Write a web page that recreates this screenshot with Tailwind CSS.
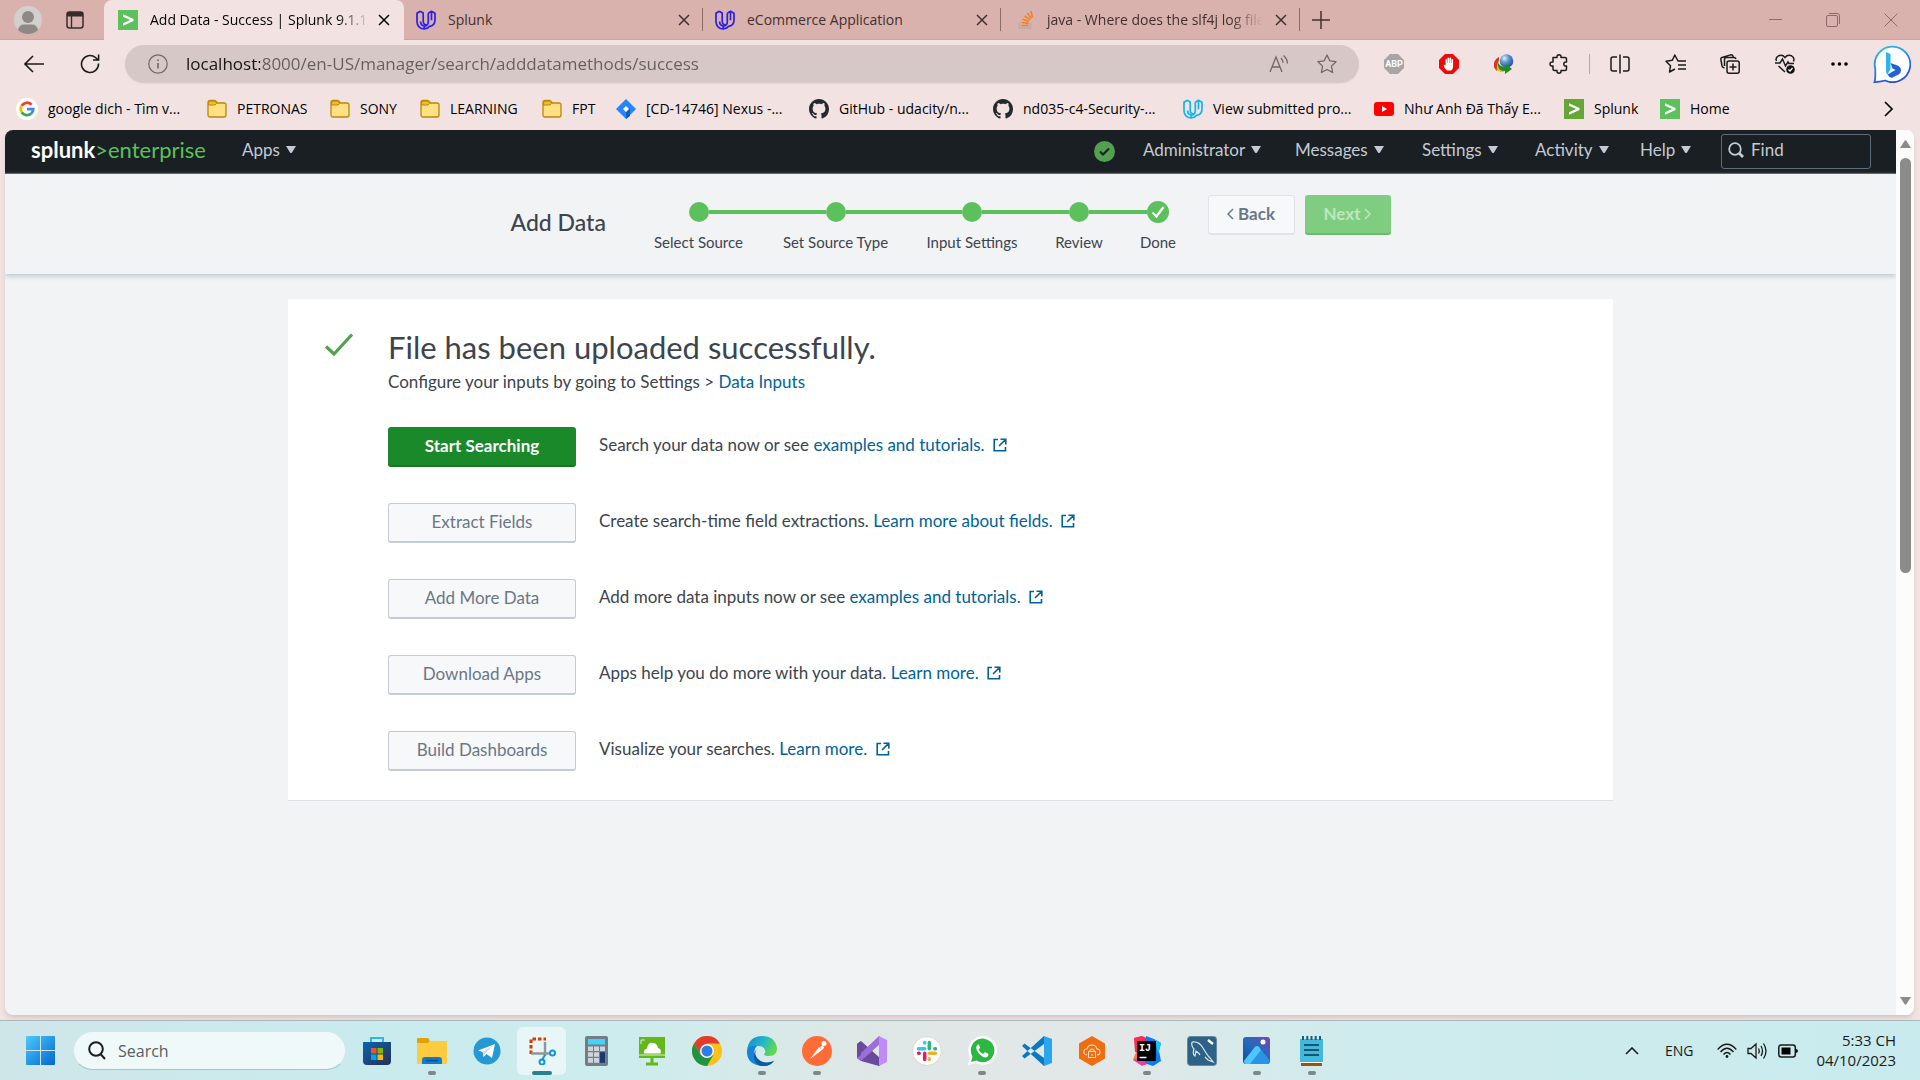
<!DOCTYPE html>
<html lang="en">
<head>
<meta charset="utf-8">
<title>Add Data - Success | Splunk 9.1.1</title>
<script src="https://cdn.jsdelivr.net/npm/@tailwindcss/browser@4"></script>
</head>
<body class="bg-[#f2e3e2] font-['Open_Sans',sans-serif] text-[#1b1b1b]">
<svg class="hidden" aria-hidden="true">
  <symbol id="close" viewBox="0 0 12 12"><path d="M1 1l10 10M11 1L1 11" stroke="currentColor" stroke-width="1.5" fill="none"/></symbol>
  <symbol id="splunk" viewBox="0 0 20 20"><path d="M5 4.2l10.5 4.7v2L5 15.8v-2.5l7.3-3.3L5 6.7z" fill="#fff"/></symbol>
  <symbol id="udacity" viewBox="0 0 20 20"><path d="M4.200 1.300L1 3.300v8.500c0 4 3 7.200 7.200 7.200V16C5.700 15.500 4.600 13.500 4.600 11.500M4.200 1.300L7.200 3v8c0 2.500 1.300 4 4 4.300M12.300 3.200l3.200-1.900L19 3.200v6.500c0 4-2.300 6.300-5.600 6.700q-1 2-5.200 2.600M12.300 3.200v8.600c0 2-1.300 4-4.100 4.300M15.500 1.300v9" fill="none" stroke="currentColor" stroke-width="1.700" stroke-linejoin="round"/></symbol>
  <symbol id="folder" viewBox="0 0 20 20"><path d="M1 4.500V3.500Q1 1.500 3 1.500h4.300q1 0 1.600.8L10.500 4H17q2 0 2 2v10q0 2-2 2H3q-2 0-2-2z" fill="#ffe083" stroke="#b9870c" stroke-width="1.300"/><path d="M1.600 6V4Q1.600 2.100 3 2.100h4.200q.8 0 1.200.6l1.300 1.600L8 6z" fill="#f3bd22" stroke="#b9870c" stroke-width="1"/></symbol>
  <symbol id="github" viewBox="0 0 16 16"><path d="M8 0C3.580 0 0 3.580 0 8c0 3.540 2.290 6.530 5.470 7.590.4.070.550-.170.550-.380 0-.190-.010-.820-.010-1.490-2.010.370-2.530-.490-2.690-.940-.090-.230-.480-.940-.820-1.130-.280-.150-.680-.520-.010-.530.630-.010 1.080.580 1.230.820.720 1.210 1.870.870 2.330.660.070-.520.280-.870.510-1.070-1.780-.2-3.640-.890-3.640-3.950 0-.870.310-1.590.820-2.150-.080-.2-.360-1.020.080-2.120 0 0 .670-.210 2.200.820.640-.180 1.320-.270 2-.270s1.360.090 2 .270c1.530-1.040 2.200-.820 2.200-.820.440 1.100.160 1.920.080 2.120.510.560.820 1.270.820 2.150 0 3.070-1.870 3.750-3.650 3.950.290.250.540.730.540 1.480 0 1.070-.010 1.930-.010 2.200 0 .210.150.460.550.380A8.010 8.010 0 0 0 16 8c0-4.420-3.580-8-8-8z" fill="#24292e"/></symbol>
  <symbol id="caret" viewBox="0 0 10 8"><path d="M0 0h10L6 6.500q-1 1-2 0z" fill="currentColor"/></symbol>
  <symbol id="external" viewBox="0 0 14 14"><path d="M5 1.500H1.200v11.300h11.300V9M7.500 1.200h5.300v5.300M12.500 1.500L6 8" fill="none" stroke="currentColor" stroke-width="1.600"/></symbol>
</svg>
<div class="flex min-h-screen flex-col">

  <!-- tab strip -->
  <header class="flex h-10 items-stretch border-b border-[#cfa39e] bg-[#d9b2ad] text-sm text-[#43302e]">
    <div class="flex w-[104px] items-center gap-6 pl-3.5">
      <button aria-label="Profile"><svg class="size-7" viewBox="0 0 28 28"><circle cx="14" cy="14" r="14" fill="#d2cfcc"/><circle cx="14" cy="11" r="6" fill="#8d8986"/><path d="M4 24q1-5.500 6-5.500h8q5 0 6 5.500-4 4-10 4T4 24z" fill="#8d8986"/></svg></button>
      <button aria-label="Tab actions"><svg class="size-[18px]" viewBox="0 0 18 18"><rect x="1" y="1" width="16" height="16" rx="2.500" fill="none" stroke="#382b2a" stroke-width="1.500"/><path d="M1 3q0-2 2-2h12q2 0 2 2v2.500H1z" fill="#382b2a"/><path d="M5.500 5v12" stroke="#382b2a" stroke-width="1.400"/></svg></button>
    </div>
    <nav class="flex items-stretch" aria-label="Tabs">
      <div class="-mb-px flex w-[300px] items-center rounded-t-lg bg-[#f2e3e2] pr-3.5 pl-3.5 text-black">
        <svg class="mr-3 size-5 shrink-0 bg-[#5cc05c]"><use href="#splunk"/></svg>
        <a href="#" class="w-[220px] overflow-hidden mask-r-from-85% whitespace-nowrap">Add Data - Success | Splunk 9.1.1</a>
        <button class="ml-auto" aria-label="Close tab"><svg class="size-3"><use href="#close"/></svg></button>
      </div>
      <div class="flex w-[298px] items-center pr-3 pl-3">
        <svg class="mr-3 size-5 shrink-0 text-[#2b1fe8]"><use href="#udacity"/></svg>
        <a href="#" class="grow">Splunk</a>
        <button aria-label="Close tab"><svg class="size-3"><use href="#close"/></svg></button>
      </div>
      <div class="my-2 flex w-[298px] items-center border-l border-[#8b6c69] pr-3 pl-3">
        <svg class="mr-3 size-5 shrink-0 text-[#2b1fe8]"><use href="#udacity"/></svg>
        <a href="#" class="grow">eCommerce Application</a>
        <button aria-label="Close tab"><svg class="size-3"><use href="#close"/></svg></button>
      </div>
      <div class="my-2 flex w-[300px] items-center border-x border-[#8b6c69] pr-3 pl-4">
        <svg class="mr-2 size-[18px] shrink-0" viewBox="0 0 18 18"><path d="M2.500 11v6h11v-6" fill="none" stroke="#bcaaa6" stroke-width="1.500"/><path d="M4.500 14.500h7M4.700 11.500l7 .9M5.500 8.200l6.600 2.200M7.500 4.800l5.500 4M10.500 2l3.800 5.600M14 0l1.500 6.500" stroke="#f48024" stroke-width="1.600"/></svg>
        <a href="#" class="w-[220px] overflow-hidden mask-r-from-85% pl-1 whitespace-nowrap">java - Where does the slf4j log file</a>
        <button class="ml-auto" aria-label="Close tab"><svg class="size-3"><use href="#close"/></svg></button>
      </div>
      <button class="px-3" aria-label="New tab"><svg class="size-[18px]" viewBox="0 0 18 18"><path d="M9 0v18M0 9h18" stroke="#43302e" stroke-width="1.500"/></svg></button>
    </nav>
    <div class="ml-auto flex items-center gap-11 pr-[22px] text-[#8a6d6a]">
      <button aria-label="Minimize"><svg class="size-[13px]" viewBox="0 0 13 13"><path d="M0 6.500h13" stroke="currentColor"/></svg></button>
      <button aria-label="Restore"><svg class="size-[14px]" viewBox="0 0 14 14" fill="none" stroke="currentColor"><rect x=".5" y="2.500" width="11" height="11" rx="1.500"/><path d="M3 .5h8q2.500 0 2.500 2.500v8"/></svg></button>
      <button aria-label="Close window"><svg class="size-[14px]" viewBox="0 0 14 14"><path d="M.5.5l13 13M13.500.5l-13 13" stroke="currentColor"/></svg></button>
    </div>
  </header>

  <!-- address row -->
  <div class="flex h-12 items-center">
    <div class="flex w-[125px] shrink-0 items-center gap-9 pl-6">
      <button aria-label="Back"><svg class="h-[18px] w-5" viewBox="0 0 20 18"><path d="M9 1L1 9l8 8M1 9h19" fill="none" stroke="currentColor" stroke-width="1.600"/></svg></button>
      <button aria-label="Refresh"><svg class="size-5" viewBox="0 0 20 20"><path d="M18.500 9.500A8.500 8.500 0 1 1 15.500 3.500L18 6M18.600.5V6H13" fill="none" stroke="currentColor" stroke-width="1.600"/></svg></button>
    </div>
    <div class="flex h-[38px] grow items-center rounded-full bg-[#d6c8c7] pr-[22px] pl-[23px] shadow-xs">
      <svg class="mr-[18px] size-5 shrink-0" viewBox="0 0 20 20" fill="none" stroke="#706866"><circle cx="10" cy="10" r="9.200" stroke-width="1.200"/><path d="M10 9v5.500M10 5.500v1.600" stroke-width="1.600"/></svg>
      <input aria-label="Address" value="localhost:8000/en-US/manager/search/adddatamethods/success" class="min-w-0 grow bg-[linear-gradient(to_right,#161414_74px,#655e5d_74px)] bg-clip-text text-[17px] leading-6 text-transparent outline-none">
      <button class="mr-7 text-[#6f6766]" aria-label="Read aloud"><svg class="size-5" viewBox="0 0 20 20" fill="none" stroke="currentColor" stroke-width="1.300"><path d="M1 18L7 3l6 15M3 13h8M12 4q2 2 2 5M14.500 1.500q4 3.500 4 8"/></svg></button>
      <button class="text-[#6f6766]" aria-label="Add to favorites"><svg class="size-5" viewBox="0 0 20 20" fill="none" stroke="currentColor" stroke-width="1.300" stroke-linejoin="round"><path d="M10 1l2.800 5.800 6.200.9-4.500 4.400 1.100 6.400L10 15.500l-5.600 3 1.100-6.400L1 7.700l6.200-.9z"/></svg></button>
    </div>
    <div class="flex w-[561px] shrink-0 items-center pl-[7px]">
      <button class="flex w-[55px] justify-center" aria-label="Adblock Plus"><svg class="size-5" viewBox="0 0 20 20"><path d="M6 0h8l6 6v8l-6 6H6l-6-6V6z" fill="#a9a5a5"/><text x="10" y="13.200" text-anchor="middle" font-family="Roboto,sans-serif" font-weight="bold" font-size="9" fill="#fff">ABP</text></svg></button>
      <button class="flex w-[55px] justify-center" aria-label="AdBlock"><svg class="size-5" viewBox="0 0 20 20"><path d="M6 0h8l6 6v8l-6 6H6l-6-6V6z" fill="#ec0b0b"/><path d="M8 16.500q-3-3-3.500-5.500.8-1 2 .7V5.500q1-1 1.600 0V9h.4V4q1-1 1.600 0v5h.4V4q1-1 1.600 0v5h.4V5.500q1-1 1.600 0v6.500q0 3-2 4.500z" fill="#fff"/></svg></button>
      <button class="flex w-[55px] justify-center" aria-label="Download manager"><svg class="size-5" viewBox="0 0 20 20"><defs><radialGradient id="globe" cx=".35" cy=".3" r=".8"><stop stop-color="#dff0ea"/><stop offset=".4" stop-color="#5b98cf"/><stop offset="1" stop-color="#1c3f9e"/></radialGradient></defs><path d="M5 3Q-1 7 .5 13q2 5 9 5l2-3Q5 15 4.500 9z" fill="#f1b719"/><path d="M5 3Q-2 7 .5 14q1 2 2.500 3-1-7 2-11z" fill="#d73528"/><circle cx="12.500" cy="7" r="6.800" fill="url(#globe)"/><path d="M4 8q1 5 8 5v-3l6 5-7 5v-3q-8 0-7-9z" fill="#1f8c26"/></svg></button>
      <button class="flex w-[55px] justify-center" aria-label="Extensions"><svg class="size-5" viewBox="0 0 20 20" fill="none" stroke="currentColor" stroke-width="1.500" stroke-linejoin="round"><path d="M4 3.500h4q-.3-2.700 2-2.700t2 2.700h4q1.500 0 1.500 1.500v3q-2.700-.3-2.700 2t2.700 2v3q0 1.500-1.500 1.500h-4q.3 2.700-2 2.700t-2-2.700H5.500Q4 16.500 4 15v-3q-3 .3-3-2t3-2z"/></svg></button>
      <span class="ml-[3px] h-5 w-px bg-[#b5a6a5]"></span>
      <button class="flex w-[60px] justify-center" aria-label="Split screen"><svg class="size-5" viewBox="0 0 20 20" fill="none" stroke="currentColor" stroke-width="1.500"><path d="M7 3H3Q1 3 1 5v10q0 2 2 2h4M10 .5v19M13 3h4q2 0 2 2v10q0 2-2 2h-4"/></svg></button>
      <button class="flex w-[52px] justify-center" aria-label="Favorites"><svg class="h-5 w-[22px]" viewBox="0 0 22 20" fill="none" stroke="currentColor" stroke-width="1.500" stroke-linejoin="round"><path d="M21 7h-8L9.800 1 7.300 6.300 1 7.300l4.500 4.500L4.500 18l5.500-3M13 11h8M13 15h8"/></svg></button>
      <button class="flex w-[55px] justify-center" aria-label="Collections"><svg class="size-5" viewBox="0 0 20 20" fill="none" stroke="currentColor" stroke-width="1.500"><rect x="7" y="7" width="12.200" height="12.200" rx="2"/><path d="M13 9.500v7M9.500 13h7M4.500 14Q2.500 13.500 2 12L.9 5.500Q.6 4 2 3.500l8.500-2.600q2-.3 2.500 1.100l.3 1.500M16 5q-.5-1.500-2-1.500H6.500q-2 0-2 2V12"/></svg></button>
      <button class="flex w-[55px] justify-center" aria-label="Browser essentials"><svg class="size-5" viewBox="0 0 20 20" fill="none" stroke="currentColor" stroke-width="1.500"><path d="M1.500 7Q0 3.500 3.500 1.800 7.500.3 10 3.500 12.500.3 16.500 1.800 20 3.500 18.500 7.500M0 9h5l2.500-4 3 7 2.500-4 1 1.500h5M3.500 12l6.500 6"/><circle cx="15.500" cy="15.500" r="4.300" fill="#111" stroke="none"/><path d="M13.500 15.500l1.500 1.500 2.500-3" stroke="#fff" stroke-width="1.200"/></svg></button>
      <button class="flex w-[54px] justify-center" aria-label="Settings and more"><svg class="h-1 w-[17px]" viewBox="0 0 17 4"><circle cx="2" cy="2" r="1.800"/><circle cx="8.500" cy="2" r="1.800"/><circle cx="15" cy="2" r="1.800"/></svg></button>
      <button class="flex w-[52px] justify-center" aria-label="Bing chat"><svg class="size-[38px]" viewBox="0 0 38 38"><defs><linearGradient id="bing" x1="0" y1="0" x2=".4" y2="1"><stop stop-color="#2cc3f3"/><stop offset="1" stop-color="#2650d8"/></linearGradient></defs><path d="M1.500 37q1-3 .8-8.500V24A17.800 17.800 0 1 1 12 35.500Q7 37 1.500 37z" fill="#fff" stroke="url(#bing)" stroke-width="1.800"/><path d="M13 7l4.500 2v15l-3 5.500q-1.500-1-1.500-3z" fill="#2cb4ee"/><path d="M14.500 29.500l8-4.500-3-1.500-2-5.500 7 2.500q3.500 1.500 3.500 5 0 2.500-2.500 4l-6 3q-2.500 1.200-5-3z" fill="#2560d9"/></svg></button>
    </div>
  </div>

  <!-- bookmarks -->
  <nav class="flex h-[42px] items-center overflow-hidden pl-4 text-sm whitespace-nowrap text-black" aria-label="Bookmarks">
    <a href="#" class="flex w-[191px] items-center gap-2.5"><svg class="size-[22px] shrink-0 rounded-full bg-white" viewBox="0 0 24 24" fill="none" stroke-width="3"><path d="M6.200 8.500A6.800 6.800 0 0 1 17 7.300" stroke="#ea4335"/><path d="M6.200 15.500a6.800 6.800 0 0 1 0-7" stroke="#fbbc05"/><path d="M16.500 17A6.800 6.800 0 0 1 6.200 15.500" stroke="#34a853"/><path d="M12 12h6.800q0 3.300-2.300 5" stroke="#4285f4"/></svg>google dich - Tìm v...</a>
    <a href="#" class="flex w-[123px] items-center gap-2.5"><svg class="size-5 shrink-0"><use href="#folder"/></svg>PETRONAS</a>
    <a href="#" class="flex w-[90px] items-center gap-2.5"><svg class="size-5 shrink-0"><use href="#folder"/></svg>SONY</a>
    <a href="#" class="flex w-[122px] items-center gap-2.5"><svg class="size-5 shrink-0"><use href="#folder"/></svg>LEARNING</a>
    <a href="#" class="flex w-[74px] items-center gap-2.5"><svg class="size-5 shrink-0"><use href="#folder"/></svg>FPT</a>
    <a href="#" class="flex w-[193px] items-center gap-2.5"><svg class="size-5 shrink-0" viewBox="0 0 20 20"><path d="M10 0l10 10-10 10L0 10z" fill="#2684ff"/><path d="M10 13l4-4v8l-4 3z" fill="#1459c9"/><path d="M10 7l3 3-3 3-3-3z" fill="#fff"/></svg>[CD-14746] Nexus -...</a>
    <a href="#" class="flex w-[184px] items-center gap-2.5"><svg class="size-5 shrink-0"><use href="#github"/></svg>GitHub - udacity/n...</a>
    <a href="#" class="flex w-[190px] items-center gap-2.5"><svg class="size-5 shrink-0"><use href="#github"/></svg>nd035-c4-Security-...</a>
    <a href="#" class="flex w-[191px] items-center gap-2.5"><svg class="size-5 shrink-0 text-[#12b5ea]"><use href="#udacity"/></svg>View submitted pro...</a>
    <a href="#" class="flex w-[190px] items-center gap-2.5"><svg class="size-5 shrink-0" viewBox="0 0 20 20"><rect y="3" width="20" height="14" rx="3" fill="#f00"/><path d="M8 7v6l5-3z" fill="#fff"/></svg>Như Anh Đã Thấy E...</a>
    <a href="#" class="flex w-[96px] items-center gap-2.5"><svg class="size-5 shrink-0 bg-[#65a637]"><use href="#splunk"/></svg>Splunk</a>
    <a href="#" class="flex w-[96px] items-center gap-2.5"><svg class="size-5 shrink-0 bg-[#5cc05c]"><use href="#splunk"/></svg>Home</a>
    <button class="mr-[26px] ml-auto" aria-label="More bookmarks"><svg class="h-4 w-2.5" viewBox="0 0 10 16"><path d="M1 1l7 7-7 7" fill="none" stroke="currentColor" stroke-width="1.700"/></svg></button>
  </nav>

  <!-- web page -->
  <div class="mr-1.5 mb-[5px] ml-[5px] flex grow overflow-hidden rounded-lg bg-[#f2f3f5] font-['Lato',sans-serif] text-[17px] leading-6 text-[#3c444d] shadow-md">
    <div class="flex min-w-0 grow flex-col">
      <div class="flex h-11 items-center border-b border-[#4b5764] bg-[#1a1f23] pr-[25px] pl-[26px] text-[#c3cbd4]">
        <a href="#" class="w-[211px] pb-1 text-[22px] leading-8 text-[#5cc05c]"><b class="text-white">splunk</b>&gt;enterprise</a>
        <a href="#" class="flex items-center gap-1.5 pb-1">Apps <svg class="h-2 w-2.5"><use href="#caret"/></svg></a>
        <svg class="mr-7 ml-auto size-[21px]" viewBox="0 0 21 21"><circle cx="10.500" cy="10.500" r="10.500" fill="#53a051"/><path d="M6 10.500l3 3 6-6" fill="none" stroke="#1a1f23" stroke-width="2"/></svg>
        <nav class="flex pb-1" aria-label="Splunk bar">
          <a href="#" class="flex w-[152px] items-center gap-1.5">Administrator <svg class="h-2 w-2.5"><use href="#caret"/></svg></a>
          <a href="#" class="flex w-[127px] items-center gap-1.5">Messages <svg class="h-2 w-2.5"><use href="#caret"/></svg></a>
          <a href="#" class="flex w-[113px] items-center gap-1.5">Settings <svg class="h-2 w-2.5"><use href="#caret"/></svg></a>
          <a href="#" class="flex w-[105px] items-center gap-1.5">Activity <svg class="h-2 w-2.5"><use href="#caret"/></svg></a>
          <a href="#" class="flex w-[81px] items-center gap-1.5">Help <svg class="h-2 w-2.5"><use href="#caret"/></svg></a>
        </nav>
        <label class="flex h-[35px] w-[150px] items-center gap-[7px] rounded-[3px] border border-[#5f6b78] px-1.5 pb-1"><svg class="size-4 shrink-0" viewBox="0 0 16 16" fill="none" stroke="currentColor"><circle cx="7" cy="7" r="5.800" stroke-width="1.800"/><path d="M11 11l4 4" stroke-width="2.800"/></svg><input type="text" placeholder="Find" aria-label="Find" class="w-full min-w-0 outline-none placeholder:text-[#c3cbd4]"></label>
      </div>

      <div class="flex h-[100px] justify-center bg-[#f2f3f5] shadow-[0_2px_5px_#b9c4cf]">
        <h1 class="mt-8 w-[123px] text-[23px] leading-8 font-medium">Add Data</h1>
        <ol class="flex pt-7 text-center text-[15px] leading-5">
          <li class="w-[130px]"><div class="mb-2.5 flex h-5 items-center"><i class="grow"></i><i class="size-5 rounded-full bg-[#5cc05c]"></i><i class="h-1 grow bg-[#5cc05c]"></i></div>Select Source</li>
          <li class="w-[144px]"><div class="mb-2.5 flex h-5 items-center"><i class="h-1 grow bg-[#5cc05c]"></i><i class="size-5 rounded-full bg-[#5cc05c]"></i><i class="h-1 grow bg-[#5cc05c]"></i></div>Set Source Type</li>
          <li class="w-[129px]"><div class="mb-2.5 flex h-5 items-center"><i class="h-1 grow bg-[#5cc05c]"></i><i class="size-5 rounded-full bg-[#5cc05c]"></i><i class="h-1 grow bg-[#5cc05c]"></i></div>Input Settings</li>
          <li class="w-[85px]"><div class="mb-2.5 flex h-5 items-center"><i class="h-1 grow bg-[#5cc05c]"></i><i class="size-5 rounded-full bg-[#5cc05c]"></i><i class="h-1 grow bg-[#5cc05c]"></i></div>Review</li>
          <li class="w-[73px]"><div class="mb-2.5 flex h-5 items-center"><i class="h-1 grow bg-[#5cc05c]"></i><svg class="size-[22px]" viewBox="0 0 22 22"><circle cx="11" cy="11" r="11" fill="#5cc05c"/><path d="M5.500 11.500l4 4L16.500 6" fill="none" stroke="#fff" stroke-width="2.200"/></svg><i class="grow"></i></div>Done</li>
        </ol>
        <div class="mt-[21px] ml-[13px] flex gap-2.5 font-bold">
          <button class="flex h-10 w-[87px] items-center justify-center gap-1 rounded-[3px] border border-b-2 border-[#e0e4e8] bg-[#f7f8fa] pb-0.5 text-[#6b7785]"><svg class="h-3 w-[7px]" viewBox="0 0 7 12"><path d="M6 1L1 6l5 5" fill="none" stroke="currentColor" stroke-width="1.500"/></svg>Back</button>
          <button disabled class="flex h-10 w-[86px] items-center justify-center gap-1 rounded-[3px] border-b-2 border-[#6dbb6e] bg-[#7fcd80] text-[#bfe6bf]">Next<svg class="h-3 w-[7px]" viewBox="0 0 7 12"><path d="M1 1l5 5-5 5" fill="none" stroke="currentColor" stroke-width="1.500"/></svg></button>
        </div>
      </div>

      <main class="mx-auto mt-[25px] flex w-[1325px] max-w-full border-b border-[#dfe2e5] bg-white px-9 pt-8 pb-[29px]">
        <svg class="mt-0.5 mr-[34px] h-6 w-[30px] shrink-0" viewBox="0 0 30 24"><path d="M2 13.500L10 21 28 1.500" fill="none" stroke="#53a051" stroke-width="3.200"/></svg>
        <div>
          <h2 class="text-[31px] leading-8">File has been uploaded successfully.</h2>
          <p class="mt-2 mb-[34px] leading-[22px]">Configure your inputs by going to Settings &gt; <a href="#" class="text-[#006297]">Data Inputs</a></p>
          <div class="flex flex-col gap-9">
            <div class="flex items-center gap-[23px]"><button class="h-10 w-[188px] rounded-[3px] border-b-2 border-[#167422] bg-[#1a8929] font-bold text-white">Start Searching</button><p class="pb-1">Search your data now or see <a href="#" class="text-[#006297]">examples and tutorials. <svg class="ml-1 inline size-[14px] align-[-1px]"><use href="#external"/></svg></a></p></div>
            <div class="flex items-center gap-[23px]"><button class="h-10 w-[188px] rounded-[3px] border border-b-2 border-[#c3cbd4] bg-[#f7f8fa] pb-0.5 text-[#6b7785]">Extract Fields</button><p class="pb-1">Create search-time field extractions. <a href="#" class="text-[#006297]">Learn more about fields. <svg class="ml-1 inline size-[14px] align-[-1px]"><use href="#external"/></svg></a></p></div>
            <div class="flex items-center gap-[23px]"><button class="h-10 w-[188px] rounded-[3px] border border-b-2 border-[#c3cbd4] bg-[#f7f8fa] pb-0.5 text-[#6b7785]">Add More Data</button><p class="pb-1">Add more data inputs now or see <a href="#" class="text-[#006297]">examples and tutorials. <svg class="ml-1 inline size-[14px] align-[-1px]"><use href="#external"/></svg></a></p></div>
            <div class="flex items-center gap-[23px]"><button class="h-10 w-[188px] rounded-[3px] border border-b-2 border-[#c3cbd4] bg-[#f7f8fa] pb-0.5 text-[#6b7785]">Download Apps</button><p class="pb-1">Apps help you do more with your data. <a href="#" class="text-[#006297]">Learn more. <svg class="ml-1 inline size-[14px] align-[-1px]"><use href="#external"/></svg></a></p></div>
            <div class="flex items-center gap-[23px]"><button class="h-10 w-[188px] rounded-[3px] border border-b-2 border-[#c3cbd4] bg-[#f7f8fa] pb-0.5 text-[#6b7785]">Build Dashboards</button><p class="pb-1">Visualize your searches. <a href="#" class="text-[#006297]">Learn more. <svg class="ml-1 inline size-[14px] align-[-1px]"><use href="#external"/></svg></a></p></div>
          </div>
        </div>
      </main>
    </div>
    <div class="flex w-[18px] shrink-0 flex-col items-center bg-[#fcfcfc] pt-2.5 pb-2.5">
      <svg class="h-2 w-[11px] shrink-0" viewBox="0 0 11 8"><path d="M0 8L4.500 1q1-1.500 2 0L11 8z" fill="#8b8b8b"/></svg>
      <div class="mt-2.5 h-[415px] w-[11px] rounded-full bg-[#8b8b8b]"></div>
      <svg class="mt-auto h-2 w-[11px] shrink-0" viewBox="0 0 11 8"><path d="M0 0L4.500 7q1 1.500 2 0L11 0z" fill="#8b8b8b"/></svg>
    </div>
  </div>

  <!-- taskbar -->
  <footer class="flex h-[60px] items-center border-t border-[#a9b9bb] bg-[linear-gradient(90deg,#cfe6e9_0%,#c9ebed_20%,#cdeced_33%,#dfe7e6_45%,#e2e8e7_58%,#cfebed_70%,#c9ebed_100%)]">
    <button class="ml-[26px]" aria-label="Start"><svg class="size-[29px]" viewBox="0 0 29 29"><defs><linearGradient id="win" x1="0" y1="0" x2="1" y2="1"><stop stop-color="#4cc9fb"/><stop offset="1" stop-color="#0069cf"/></linearGradient></defs><path d="M0 1q0-1 1-1h13v14H0zM15 0h13q1 0 1 1v13H15zM0 15h14v14H1q-1 0-1-1zM15 15h14v13q0 1-1 1H15z" fill="url(#win)"/></svg></button>
    <label class="ml-[18px] flex h-[39px] w-[273px] items-center gap-3 rounded-full border border-b-[#a6c3c5] border-[#d3e6e8] bg-[#f0f9fa] px-[13px]"><svg class="size-[19px] shrink-0" viewBox="0 0 19 19" fill="none" stroke="#1d1d1d" stroke-width="2"><circle cx="9" cy="8" r="6.800"/><path d="M13.500 13l4.500 5"/></svg><input type="text" placeholder="Search" aria-label="Search" class="w-full min-w-0 text-base outline-none placeholder:text-[#555f61]"></label>
    <nav class="ml-[3px] flex items-center" aria-label="Pinned apps">
      <button class="relative flex h-12 w-[55px] items-center justify-center" aria-label="Microsoft Store"><svg class="size-[30px]" viewBox="0 0 30 30"><defs><linearGradient id="store" x1="0" y1="0" x2="1" y2="1"><stop stop-color="#0764b4"/><stop offset="1" stop-color="#2a3052"/></linearGradient></defs><path d="M9 7V2h12v5" fill="none" stroke="#2fb5e8" stroke-width="2"/><path d="M1 6h28v19q0 4-4 4H5q-4 0-4-4z" fill="url(#store)"/><path d="M9 12h5.500v5.500H9z" fill="#f25022"/><path d="M15.500 12H21v5.500h-5.500z" fill="#7fba00"/><path d="M9 18.500h5.500V24H9z" fill="#00a4ef"/><path d="M15.500 18.500H21V24h-5.500z" fill="#ffb900"/></svg></button>
      <button class="relative flex h-12 w-[55px] items-center justify-center" aria-label="File Explorer"><svg class="size-[30px]" viewBox="0 0 30 30"><path d="M0 3q0-1 1-1h9q2 0 2.500 2v3H0z" fill="#e0a106"/><path d="M0 7h11l2-2h17v22q0 1-1 1H1q-1 0-1-1z" fill="#fdcb3e"/><path d="M5 28v-4q0-3 3-3h14q3 0 3 3v4z" fill="#0f7bd0"/><path d="M9 24.500h12" stroke="#0a4b91" stroke-width="1.500"/></svg><i class="absolute bottom-0 h-1 w-2 rounded-full bg-[#7e8788]"></i></button>
      <button class="relative flex h-12 w-[55px] items-center justify-center" aria-label="Telegram"><svg class="size-7" viewBox="0 0 28 28"><circle cx="14" cy="14" r="13.500" fill="#2499d6"/><path d="M5 13.500L22 7l-3 14-5.500-4-3 3-.8-5z" fill="#fff"/><path d="M9.700 15L20 8.500l-8 8-1.500 3.500z" fill="#c2dcec"/></svg></button>
      <button class="relative flex h-12 w-[55px] items-center justify-center" aria-label="Snipping Tool"><i class="absolute inset-x-[3px] inset-y-0 rounded-md bg-[#e9f6f7]"></i><svg class="relative size-7" viewBox="0 0 28 28"><path d="M3 17V2h15" fill="none" stroke="#d83b01" stroke-width="3" stroke-dasharray="3.500 2"/><path d="M17 5v14M3 16.500h19" stroke="#8e979d" stroke-width="2.500"/><circle cx="24.500" cy="16" r="2.500" fill="none" stroke="#0f95dc" stroke-width="2"/><circle cx="14" cy="25" r="2.500" fill="none" stroke="#0f95dc" stroke-width="2"/><path d="M17 18l-3 5" stroke="#0f95dc" stroke-width="2"/></svg><i class="absolute bottom-0 h-1 w-5 rounded-full bg-[#27808f]"></i></button>
      <button class="relative flex h-12 w-[55px] items-center justify-center" aria-label="Calculator"><svg class="h-[30px] w-[23px]" viewBox="0 0 23 30"><rect width="23" height="30" rx="2" fill="#747c86"/><path d="M3 3h17v5.500H3z" fill="#43d3f7"/><path d="M3 10.500h5V15H3zM9 10.500h5V15H9zM15 10.500h5V15h-5zM3 16.200h5v4.500H3zM9 16.200h5v4.500H9zM3 22h5v4.800H3zM9 22h5v4.800H9z" fill="#cfd4da"/><path d="M15 16.200h5v10.600h-5z" fill="#143a78"/></svg></button>
      <button class="relative flex h-12 w-[55px] items-center justify-center" aria-label="Cloud desktop"><svg class="h-[30px] w-7" viewBox="0 0 28 30"><path d="M1 1h26v21H1z" fill="#62b71b"/><path d="M6 17.500q-1-4 3-5Q10 6 15 7q4 0 5 5 4 1 2.500 5.500z" fill="#fff"/><path d="M3 8V4h4M1 19h26" stroke="#dff2cc" fill="none"/><path d="M14 22v6M8 28h12" stroke="#62b71b" stroke-width="3"/></svg></button>
      <button class="relative flex h-12 w-[55px] items-center justify-center" aria-label="Chrome"><svg class="size-[30px]" viewBox="0 0 30 30"><circle cx="15" cy="15" r="15" fill="#fbc116"/><path d="M2 7.500A15 15 0 0 1 28 7.500H15L8.500 18z" fill="#e33b2e"/><path d="M2 7.500A15 15 0 0 0 15 30l6.500-11.200L9 18.800z" fill="#229342"/><circle cx="15" cy="15" r="7" fill="#fff"/><circle cx="15" cy="15" r="5.500" fill="#2f7de9"/></svg></button>
      <button class="relative flex h-12 w-[55px] items-center justify-center" aria-label="Edge"><svg class="size-[30px]" viewBox="0 0 30 30"><defs><linearGradient id="edge" x1="0" y1="0" x2="1" y2=".4"><stop stop-color="#1684d8"/><stop offset=".6" stop-color="#27b9c4"/><stop offset="1" stop-color="#60d84e"/></linearGradient></defs><path d="M0 14Q2 0 15 0t15 12q0 8-8 8-5 0-5-2 2-1 1-4-1-4-7-4Q3 10 0 14z" fill="url(#edge)"/><path d="M0 14q3-5 10-4-4 3-2 9 3 8 13 8 3 0 6-2-5 6-13 5Q-1 28 0 14z" fill="#1783d7"/><path d="M11 12q-5 4-1 10 6 7 17 3-5 6-13 5-6-2-7-9 0-6 4-9z" fill="#0c59a4"/></svg><i class="absolute bottom-0 h-1 w-2 rounded-full bg-[#7e8788]"></i></button>
      <button class="relative flex h-12 w-[55px] items-center justify-center" aria-label="Postman"><svg class="size-[30px]" viewBox="0 0 30 30"><circle cx="15" cy="15" r="15" fill="#ff6c37"/><path d="M8 23l9-12 3 3zM18 11l3-2 1 3-2 2z" fill="#fff"/><circle cx="22" cy="7.500" r="2.500" fill="#fff"/></svg><i class="absolute bottom-0 h-1 w-2 rounded-full bg-[#7e8788]"></i></button>
      <button class="relative flex h-12 w-[55px] items-center justify-center" aria-label="Visual Studio"><svg class="size-[30px]" viewBox="0 0 30 30"><path d="M0 8l4-3 19 17v8h-1L4 25l-4-3v-4l4 1V11L0 12z" fill="#6b4a9e"/><path d="M0 22l4 3L23 8V0h-1L4 17v2l-4-1z" fill="#9a6fd8"/><path d="M22 0l8 4v22l-8 4z" fill="#c18bf7"/><path d="M22 10v10l-6-5z" fill="#dfe8e7"/><path d="M0 8l4-3v14l-4 3z" fill="#6b4a9e"/></svg></button>
      <button class="relative flex h-12 w-[55px] items-center justify-center" aria-label="Slack"><svg class="size-[30px]" viewBox="0 0 30 30" stroke-width="3.500" stroke-linecap="round"><circle cx="15" cy="15" r="14.500" fill="#fff" stroke="#d6d6d6" stroke-width="1"/><path d="M12.700 6.500v.5M6.500 12.700h6.200" stroke="#36c5f0"/><path d="M17.300 6.500v6.200M23.500 12.700h-.7" stroke="#2eb67d"/><path d="M17.300 23.500v-.7M17.300 17.300h6.200" stroke="#ecb22e"/><path d="M12.700 17.300v6.200M6.500 17.300h.7" stroke="#e01e5a"/></svg></button>
      <button class="relative flex h-12 w-[55px] items-center justify-center" aria-label="WhatsApp"><svg class="size-[30px]" viewBox="0 0 30 30"><path d="M1 29l2-8A14.300 14.300 0 1 1 9 27z" fill="#fff"/><path d="M4 26l1.500-5.500A11.800 11.800 0 1 1 9.500 24.500z" fill="#2bb741"/><path d="M11 8.500q-3 2-1 6 3 6 8.500 7 3-.5 3-3.500l-3.500-2-2 2q-3-1-4.500-4.500l1.500-1.500-1-3.500z" fill="#fff"/></svg><i class="absolute bottom-0 h-1 w-2 rounded-full bg-[#7e8788]"></i></button>
      <button class="relative flex h-12 w-[55px] items-center justify-center" aria-label="Visual Studio Code"><svg class="size-[30px]" viewBox="0 0 30 30"><path d="M0 10l2.500-2.500L22 22v8zM0 20l2.500 2.500L22 8V0z" fill="#0a78c2"/><path d="M22 0l8 3v24l-8 3z" fill="#29a6ee"/></svg></button>
      <button class="relative flex h-12 w-[55px] items-center justify-center" aria-label="Cloud security"><svg class="size-[30px]" viewBox="0 0 30 30"><path d="M15 0l13 7.500v15L15 30 2 22.500v-15z" fill="#ef6c0f"/><path d="M10 19q-4-1-3-4 0-2 3-2 1-4 5-4t5 4q3 0 3 3t-3 3M11.500 15.500h7v6h-7zM13 15.500V14q2-2 4 0v1.500M15 18v2" fill="none" stroke="#ffe0c4" stroke-width="1.100"/></svg></button>
      <button class="relative flex h-12 w-[55px] items-center justify-center" aria-label="IntelliJ IDEA"><svg class="size-[30px]" viewBox="0 0 30 30"><path d="M2 2l8-2 12 5-8 24L1 24l3-8z" fill="#fc801d"/><path d="M2 2l8-2 10 5-9 10-8 1z" fill="#fe2857"/><path d="M14 0l8 3 7 4-2 8 2 10-8 5-9-3z" fill="#087cfa"/><path d="M1 24l8-4 6 8-5 2z" fill="#e83fa8"/><path d="M23 4l6 3-3 11z" fill="#1bc8f2"/><path d="M5 5h19v20H5z"/><path d="M7.500 21.500h7" stroke="#fff" stroke-width="1.500"/><text x="7" y="15" font-family="Liberation Mono,monospace" font-weight="bold" font-size="10" fill="#fff">IJ</text></svg><i class="absolute bottom-0 h-1 w-2 rounded-full bg-[#7e8788]"></i></button>
      <button class="relative flex h-12 w-[55px] items-center justify-center" aria-label="MySQL Workbench"><svg class="size-[30px]" viewBox="0 0 30 30"><rect x=".5" y=".5" width="29" height="29" rx="3" fill="#2d6286" stroke="#65899f"/><path d="M5 6q7-1 11 6t7 10l3 4-5-2-3-3M5 6q-1 4 2 7-2 5 1 7l1-5q3 2 4 4" fill="none" stroke="#d6e6ef" stroke-width="1.200"/><path d="M21 4l5 4" stroke="#fff" stroke-width="2.500"/></svg></button>
      <button class="relative flex h-12 w-[55px] items-center justify-center" aria-label="Photos"><svg class="size-[27px]" viewBox="0 0 27 27"><defs><linearGradient id="photo" x1="1" y1="0" x2="0" y2="1"><stop stop-color="#7448a8"/><stop offset=".5" stop-color="#2469bd"/><stop offset="1" stop-color="#0b4fa0"/></linearGradient></defs><rect width="27" height="27" rx="3" fill="url(#photo)"/><path d="M1 24L12 10q2-2 4 0l11 14q0 3-3 3H3q-2 0-2-3z" fill="#2794e8"/><path d="M1 24L12 10q2-2 4 0l2 3L7 27H3q-2 0-2-3z" fill="#4fc6f8"/><circle cx="20" cy="5" r="2.500" fill="#fff"/></svg><i class="absolute bottom-0 h-1 w-2 rounded-full bg-[#7e8788]"></i></button>
      <button class="relative flex h-12 w-[55px] items-center justify-center" aria-label="Notepad"><svg class="h-[30px] w-[23px]" viewBox="0 0 23 30"><path d="M0 3h23v23H0z" fill="#41b8dc"/><path d="M0 26h23v1H0z" fill="#fff"/><path d="M1 27h21v3H1z" fill="#9c5211"/><path d="M3 0v4M7.300 0v4M11.500 0v4M15.700 0v4M20 0v4" stroke="#135d7d" stroke-width="2"/><path d="M4 9h15M4 14h15M4 19h15" stroke="#125672" stroke-width="2"/></svg><i class="absolute bottom-0 h-1 w-2 rounded-full bg-[#7e8788]"></i></button>
    </nav>
    <div class="ml-auto flex items-center pr-6 text-sm">
      <button class="mr-[26px]" aria-label="Hidden icons"><svg class="h-2 w-3.5" viewBox="0 0 14 8"><path d="M1 7l6-6 6 6" fill="none" stroke="#1b1b1b" stroke-width="1.600"/></svg></button>
      <button class="w-[52px] text-left">ENG</button>
      <button class="flex items-center gap-2.5" aria-label="Network, volume, battery">
        <svg class="h-4 w-5" viewBox="0 0 20 16" fill="none" stroke="#1b1b1b" stroke-width="1.400"><path d="M.7 6.500q9.300-10.500 18.600 0M3.500 9q6.500-7.500 13 0M6.500 11.500q3.500-4 7 0"/><circle cx="10" cy="13.500" r="1.400" fill="#1b1b1b" stroke="none"/></svg>
        <svg class="h-[18px] w-[21px]" viewBox="0 0 21 18" fill="none" stroke="#1b1b1b" stroke-width="1.300"><path d="M1 6.500h3L9 2v14l-5-4.500H1zM11.500 6.500q1.500 2.500 0 5M14 4q3 5 0 10M16.500 1.500q5 7.500 0 15"/></svg>
        <svg class="h-3.5 w-5" viewBox="0 0 20 14"><rect x=".8" y="1" width="16.500" height="12" rx="2.500" fill="none" stroke="#1b1b1b" stroke-width="1.500"/><path d="M3.500 3.500h9v7h-9z"/><path d="M17.500 5q2.500 0 2.500 2t-2.500 2z"/></svg>
      </button>
      <button class="ml-[18px] w-20 pb-0.5 text-right text-[15px] leading-5">5:33 CH<br>04/10/2023</button>
    </div>
  </footer>
</div>
</body>
</html>
